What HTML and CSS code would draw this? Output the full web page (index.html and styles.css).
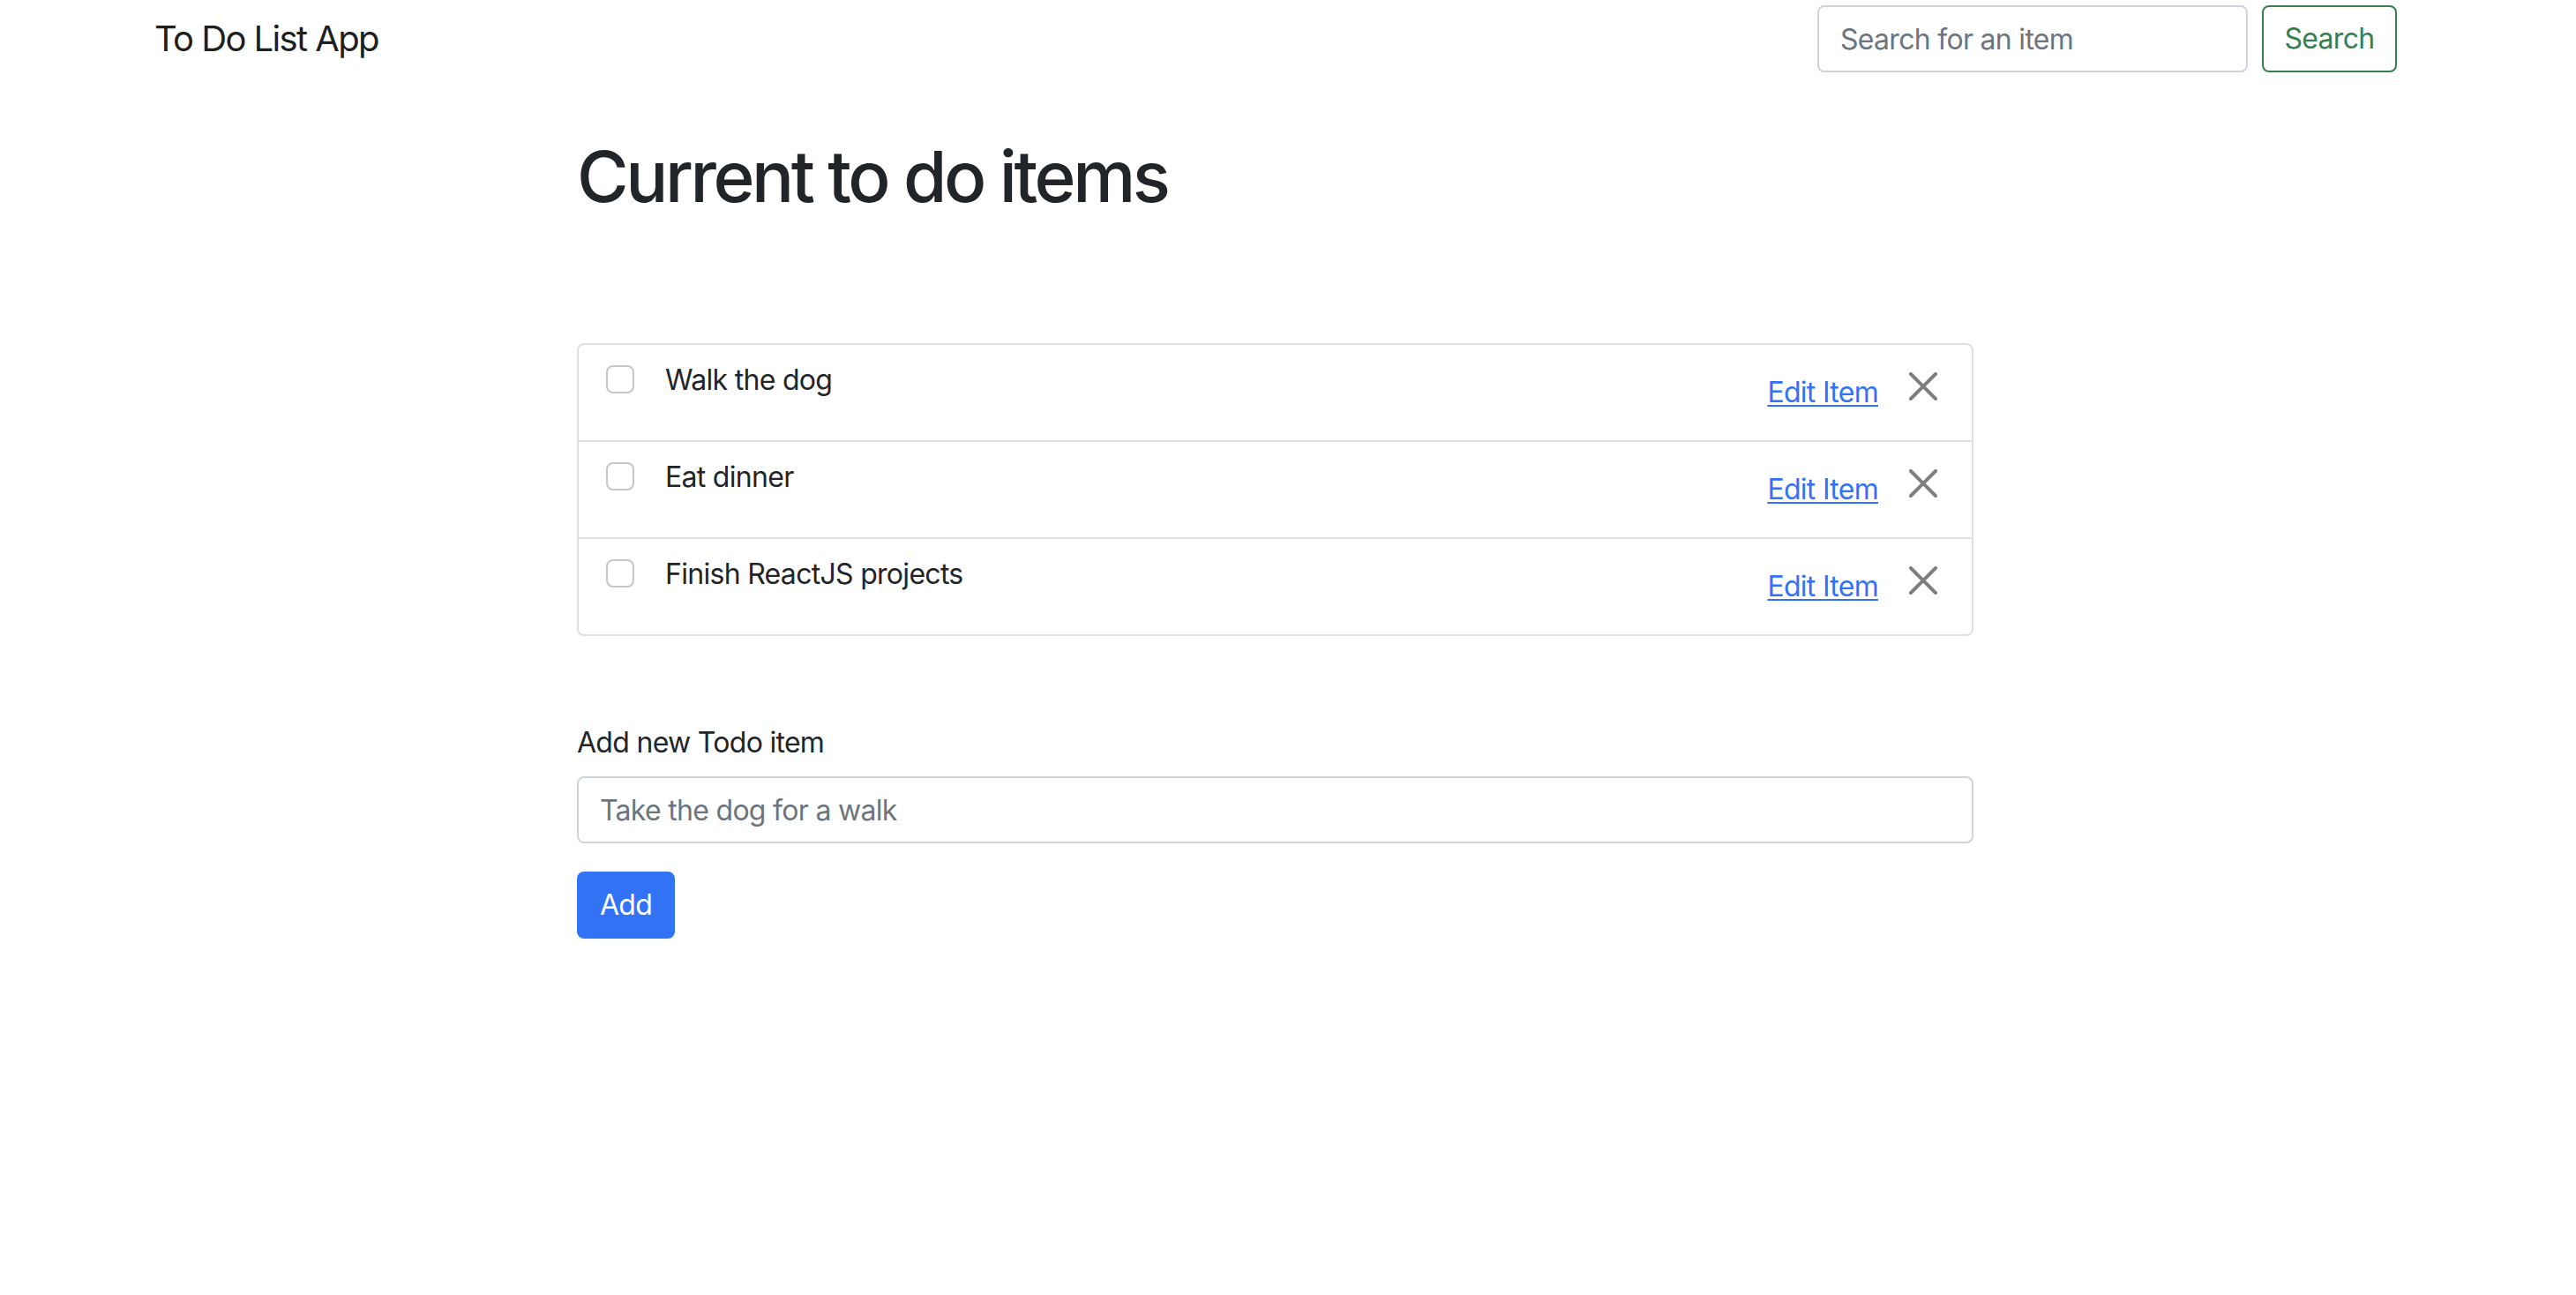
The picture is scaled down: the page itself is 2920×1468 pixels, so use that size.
FILE: index.html
```html
<!DOCTYPE html>
<html lang="en">
<head>
<meta charset="utf-8">
<title>To Do List App</title>
<link rel="stylesheet" href="styles.css">
</head>
<body>
<nav class="navbar">
  <a class="brand" href="#">To Do List App</a>
  <form class="search-form">
    <input class="search-input" type="search" placeholder="Search for an item">
    <button class="search-btn" type="button">Search</button>
  </form>
</nav>
<main class="main">
  <h1 class="title">Current to do items</h1>
  <ul class="todo-list">
    <li class="todo-row">
      <label class="todo-check"><input type="checkbox" class="check-box"><span class="todo-text">Walk the dog</span></label>
      <div class="todo-actions"><a class="edit-link" href="#">Edit Item</a><button class="close-btn" type="button" aria-label="Close"><svg viewBox="0 0 16 16" width="32" height="32"><path d="M.293.293a1 1 0 0 1 1.414 0L8 6.586 14.293.293a1 1 0 1 1 1.414 1.414L9.414 8l6.293 6.293a1 1 0 0 1-1.414 1.414L8 9.414l-6.293 6.293a1 1 0 0 1-1.414-1.414L6.586 8 .293 1.707a1 1 0 0 1 0-1.414z"/></svg></button></div>
    </li>
    <li class="todo-row">
      <label class="todo-check"><input type="checkbox" class="check-box"><span class="todo-text">Eat dinner</span></label>
      <div class="todo-actions"><a class="edit-link" href="#">Edit Item</a><button class="close-btn" type="button" aria-label="Close"><svg viewBox="0 0 16 16" width="32" height="32"><path d="M.293.293a1 1 0 0 1 1.414 0L8 6.586 14.293.293a1 1 0 1 1 1.414 1.414L9.414 8l6.293 6.293a1 1 0 0 1-1.414 1.414L8 9.414l-6.293 6.293a1 1 0 0 1-1.414-1.414L6.586 8 .293 1.707a1 1 0 0 1 0-1.414z"/></svg></button></div>
    </li>
    <li class="todo-row">
      <label class="todo-check"><input type="checkbox" class="check-box"><span class="todo-text">Finish ReactJS projects</span></label>
      <div class="todo-actions"><a class="edit-link" href="#">Edit Item</a><button class="close-btn" type="button" aria-label="Close"><svg viewBox="0 0 16 16" width="32" height="32"><path d="M.293.293a1 1 0 0 1 1.414 0L8 6.586 14.293.293a1 1 0 1 1 1.414 1.414L9.414 8l6.293 6.293a1 1 0 0 1-1.414 1.414L8 9.414l-6.293 6.293a1 1 0 0 1-1.414-1.414L6.586 8 .293 1.707a1 1 0 0 1 0-1.414z"/></svg></button></div>
    </li>
  </ul>
  <form class="add-form">
    <label class="add-label" for="new-item">Add new Todo item</label>
    <input id="new-item" class="add-input" type="text" placeholder="Take the dog for a walk">
    <button class="add-btn" type="button">Add</button>
  </form>
</main>
</body>
</html>
```

FILE: styles.css
```css
* { box-sizing: border-box; }

html, body {
  margin: 0;
  padding: 0;
  background: #fff;
}

body {
  font-family: Inter, "Liberation Sans", sans-serif;
  font-size: 32px;
  line-height: 48px;
  letter-spacing: -0.022em;
  color: #212529;
}

.navbar {
  display: flex;
  justify-content: space-between;
  align-items: center;
  padding: 6px 203px 6px 175px;
}

.brand {
  font-size: 40px;
  line-height: 56px;
  letter-spacing: -0.04em;
  color: rgba(0, 0, 0, 0.9);
  text-decoration: none;
}

.search-form {
  display: flex;
  gap: 16px;
}

.search-input,
.add-input {
  font: inherit;
  letter-spacing: inherit;
  height: 76px;
  padding: 12px 24px;
  border: 2px solid #ced4da;
  border-radius: 8px;
  color: #212529;
  background: #fff;
  outline: none;
}

.search-input { width: 488px; }

.search-input::placeholder,
.add-input::placeholder { color: #6c757d; }

.search-btn {
  font: inherit;
  letter-spacing: inherit;
  width: 153px;
  height: 76px;
  padding: 12px 0;
  border: 2px solid #35804f;
  border-radius: 8px;
  background: #fff;
  color: #35804f;
  text-align: center;
}

.main {
  width: 1583px;
  margin-left: 654px;
  padding-top: 64px;
}

.title {
  margin: 0 0 141px;
  font-size: 80px;
  line-height: 96px;
  font-weight: 500;
  letter-spacing: -0.043em;
  color: #212529;
}

.todo-list {
  list-style: none;
  margin: 0 0 97px;
  padding: 0;
  border: 2px solid #dfdfdf;
  border-radius: 8px;
}

.todo-row {
  display: flex;
  justify-content: space-between;
  align-items: flex-start;
  height: 108px;
  padding: 16px 31px 16px 32px;
}

.todo-row + .todo-row {
  height: 110px;
  border-top: 2px solid #dfdfdf;
}

.todo-check {
  display: flex;
  align-items: flex-start;
}

.check-box {
  appearance: none;
  -webkit-appearance: none;
  width: 32px;
  height: 32px;
  margin: 7px 35px 0 -1px;
  border: 2px solid #c6c6c6;
  border-radius: 8px;
  background: #fff;
  flex: none;
}

.todo-actions {
  display: flex;
  align-items: flex-start;
}

.edit-link {
  margin-top: 14px;
  color: #3273f6;
  text-decoration: underline;
  text-decoration-thickness: 2px;
  text-underline-offset: 3px;
}

.close-btn {
  margin: 7px 0 0 27px;
  width: 48px;
  height: 48px;
  padding: 8px;
  border: 0;
  background: transparent;
  opacity: 0.5;
  display: flex;
}

.close-btn svg { display: block; fill: #000; }

.add-form {
  display: flex;
  flex-direction: column;
  align-items: flex-start;
}

.add-label {
  margin-bottom: 14px;
}

.add-input {
  width: 100%;
}

.add-btn {
  font: inherit;
  letter-spacing: inherit;
  margin-top: 32px;
  height: 76px;
  padding: 12px 24px;
  border: 2px solid transparent;
  border-radius: 8px;
  background: #3273f6;
  color: #fff;
}
```
